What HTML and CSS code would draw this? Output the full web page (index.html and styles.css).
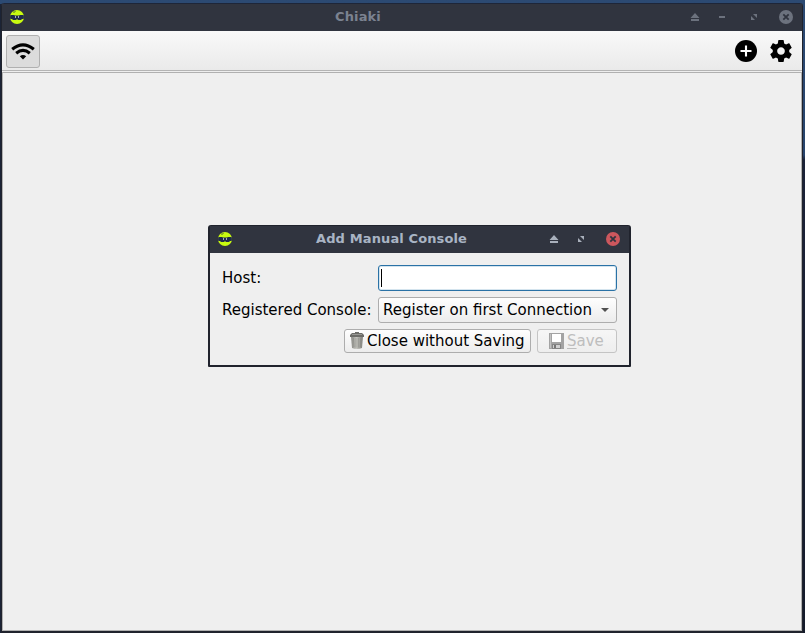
FILE: index.html
```
<!DOCTYPE html>
<html lang="en">
<head>
<meta charset="utf-8">
<title>Chiaki</title>
<link rel="stylesheet" href="styles.css">
</head>
<body>
<svg width="0" height="0" class="defs">
  <defs>
    <clipPath id="disc"><circle cx="7" cy="7" r="7"/></clipPath>
    <linearGradient id="metal" x1="0" x2="1"><stop offset="0" stop-color="#858580"/><stop offset=".45" stop-color="#c4c4be"/><stop offset="1" stop-color="#7c7c77"/></linearGradient>
    <symbol id="logo" viewBox="0 0 14 14"><g clip-path="url(#disc)"><path fill="#c8fa10" d="M0 0h14v14H0z"/><path fill="#202b4b" d="M0 5h4l1 .5h4l1-.5h4v4h-2l-1 1H8L7 9l-1 1H3L2 9H0z"/><path fill="#8bb01e" d="M3 1h3v1H5v1H3z"/><path fill="#a6a8c4" d="M5 6h1v2H5zM8 6h1v2H8z"/></g></symbol>
    <symbol id="shade" viewBox="0 0 10 8"><path fill="currentColor" d="M5 0l4.5 5h-9zM1 6h8v2H1z"/></symbol>
    <symbol id="max" viewBox="0 0 6 6"><path fill="currentColor" d="M2 0h4v4zM0 2l4 4H0z"/></symbol>
    <symbol id="close" viewBox="0 0 14 14"><circle cx="7" cy="7" r="7" fill="currentColor"/><path stroke="#30343f" stroke-width="1.8" d="M4.3 4.3l5.4 5.4M9.7 4.3L4.3 9.7"/></symbol>
  </defs>
</svg>
<main class="window">
  <header class="titlebar">
    <svg class="logo"><use href="#logo"/></svg>
    <h1>Chiaki</h1>
    <svg class="shade"><use href="#shade"/></svg>
    <i class="minimize"></i>
    <svg class="max"><use href="#max"/></svg>
    <svg class="close"><use href="#close"/></svg>
  </header>
  <nav class="toolbar">
    <button class="discover" aria-label="Discovery"><svg viewBox="0 0 24 24" width="24" height="24"><path fill="none" stroke="#000" stroke-width="3.1" d="M1.2 10.3Q12 1.6 22.8 10.3M5.2 14.2Q12 8.6 18.8 14.2"/><path d="M8.8 17.3Q12 14.6 15.2 17.3L12 20.5z"/></svg></button>
    <span class="spacer"></span>
    <svg class="add" viewBox="0 0 22 22"><circle cx="11" cy="11" r="11"/><path stroke="#fff" stroke-width="2.1" d="M11 5.5v11M5.5 11h11"/></svg>
    <svg class="gear" viewBox="2 2 20 20"><path d="M19.43 12.98c.04-.32.07-.64.07-.98s-.03-.66-.07-.98l2.11-1.65c.19-.15.24-.42.12-.64l-2-3.46c-.12-.22-.39-.3-.61-.22l-2.49 1c-.52-.4-1.08-.73-1.69-.98l-.38-2.65C14.46 2.18 14.25 2 14 2h-4c-.25 0-.46.18-.49.42l-.38 2.65c-.61.25-1.17.59-1.69.98l-2.49-1c-.23-.09-.49 0-.61.22l-2 3.46c-.13.22-.07.49.12.64l2.11 1.65c-.04.32-.07.65-.07.98s.03.66.07.98l-2.11 1.65c-.19.15-.24.42-.12.64l2 3.46c.12.22.39.3.61.22l2.49-1c.52.4 1.08.73 1.69.98l.38 2.65c.03.24.24.42.49.42h4c.25 0 .46-.18.49-.42l.38-2.65c.61-.25 1.17-.59 1.69-.98l2.49 1c.23.09.49 0 .61-.22l2-3.46c.12-.22.07-.49-.12-.64l-2.11-1.65zM12 15.5c-1.93 0-3.5-1.57-3.5-3.5s1.57-3.5 3.5-3.5 3.5 1.57 3.5 3.5-1.57 3.5-3.5 3.5z"/></svg>
  </nav>
  <section class="content"></section>
</main>
<div class="dialog" role="dialog">
  <header class="titlebar active">
    <svg class="logo"><use href="#logo"/></svg>
    <h1>Add Manual Console</h1>
    <svg class="shade"><use href="#shade"/></svg>
    <svg class="max"><use href="#max"/></svg>
    <svg class="close"><use href="#close"/></svg>
  </header>
  <div class="form">
    <span class="label">Host:</span>
    <div class="input"><i class="caret"></i></div>
    <span class="label">Registered Console:</span>
    <div class="select"><span>Register on first Connection</span><svg width="8" height="4"><path fill="#505050" d="M0 0h8L4 4z"/></svg></div>
  </div>
  <footer class="actions">
    <button class="btn discard"><svg width="14" height="17" viewBox="0 0 14 17"><path fill="url(#metal)" d="M1 4h12l-1 12q-5 2-10 0z"/><path stroke="#83837e" stroke-width=".5" d="M3.5 6l.5 9M6 6v9.5M8.3 6v9.5M10.8 6l-.5 9"/><path fill="#6c6c68" d="M0 3L2 1h3V0h4v1h3l2 2v2H0z"/><path fill="#989894" d="M2 2h10v1H2z"/></svg><span>Close without Saving</span></button>
    <button class="btn save" disabled><svg width="15" height="16" viewBox="0 0 15 16"><path fill="#a3a3a3" d="M0 0h15v16H0z"/><path fill="#c2c2c2" d="M1 1h1v14H1z"/><path fill="#fff" d="M3 1h9v8H3z"/><path fill="#858585" d="M3 11h9v5H3z"/><path fill="#d0d0d0" d="M4 12h7v3H4z"/><path fill="#777" d="M5 12h2v3H5z"/></svg><span><u>S</u>ave</span></button>
  </footer>
</div>
</body>
</html>
```
FILE: styles.css
```
* { box-sizing: border-box; }
body {
  margin: 0;
  width: 805px;
  height: 633px;
  padding: 3px 2px 0 1px;
  overflow: hidden;
  position: relative;
  background: linear-gradient(90deg, #1b2335 2px, transparent 2px) 0 4px no-repeat, linear-gradient(#2c4a73, #27446c 155px, #1b2238 160px, #151b2b);
  font: 15px "DejaVu Sans", sans-serif;
  color: #000;
}
.defs { position: absolute; }
svg { display: block; flex: none; }
.window {
  height: 630px;
  border: 1px solid #20232d;
  border-top-color: #1e2639;
  border-bottom-width: 2px;
  border-radius: 3px 3px 0 0;
  display: flex;
  flex-direction: column;
  background: #eeeeee;
}
.titlebar {
  height: 27px;
  padding: 0 9px 1px 8px;
  flex: none;
  display: flex;
  align-items: center;
  background: #30343f;
  color: #6c727e;
}
.titlebar h1 {
  flex: 1;
  margin: 0;
  padding-left: 2px;
  font-size: 13px;
  line-height: 16px;
  font-weight: bold;
  letter-spacing: .12px;
  color: #7b8290;
  text-align: center;
}
.titlebar .logo { width: 14px; height: 14px; }
.titlebar .shade { width: 10px; height: 8px; }
.titlebar .max { width: 6px; height: 6px; margin: 0 22px 0 24px; }
.titlebar .close { width: 14px; height: 14px; }
.minimize { width: 6px; height: 2px; margin: 0 2px 0 19px; background: currentColor; }
.titlebar.active .max { margin-left: 19px; }
.toolbar {
  height: 40px;
  flex: none;
  padding: 0 10px 0 4px;
  display: flex;
  align-items: center;
  border-bottom: 1px solid #b4b4b4;
  background: linear-gradient(#f9f9f9, #eaeaea);
}
.discover {
  width: 34px;
  height: 33px;
  margin-top: 1px;
  padding: 0;
  display: grid;
  place-items: center;
  border: 1px solid #b0b0b0;
  border-radius: 3px;
  background: #dcdcdc;
}
.spacer { flex: 1; }
.add { width: 22px; height: 22px; margin-right: 13px; }
.gear { width: 22px; height: 22px; }
.content {
  flex: 1;
  margin-top: 1px;
  border: 1px solid #b0b0b0;
  background: #efefef;
}
.dialog {
  position: absolute;
  left: 208px;
  top: 225px;
  width: 423px;
  height: 142px;
  border: 2px solid #20232d;
  border-top-width: 1px;
  border-radius: 3px 3px 1px 1px;
  background: #efefef;
}
.titlebar.active { color: #a9b0bc; }
.titlebar.active h1 { color: #a9b4c4; }
.active .close { color: #cc575d; }
.form {
  padding: 12px 12px 0;
  display: grid;
  grid-template-columns: 150px 239px;
  grid-template-rows: 26px 26px;
  column-gap: 6px;
  row-gap: 6px;
  align-items: center;
}
.label { white-space: nowrap; }
.input {
  height: 26px;
  padding: 3px 2px;
  border: 1px solid #2a72a6;
  border-radius: 3px;
  background: #fff;
  box-shadow: inset 0 0 0 1px #d4e4ee;
}
.caret { display: block; width: 1px; height: 18px; background: #000; }
.select, .btn {
  border: 1px solid #adadad;
  border-radius: 3px;
  background: linear-gradient(#fefefe, #ececec);
  display: flex;
  align-items: center;
  white-space: nowrap;
}
.select { height: 26px; padding: 0 7px 0 4px; justify-content: space-between; }
.actions { display: flex; justify-content: flex-end; gap: 6px; padding: 6px 12px 0; }
.btn { height: 24px; padding: 0; font: inherit; color: #000; }
.btn svg { margin-top: -1px; }
.discard { width: 187px; padding-left: 5px; gap: 3px; }
.save { width: 80px; padding-left: 11px; gap: 3px; color: #bebebe; border-color: #c4c4c4; background: linear-gradient(#f6f6f6, #eeeeee); }
.save u { text-underline-offset: 2px; }
```
